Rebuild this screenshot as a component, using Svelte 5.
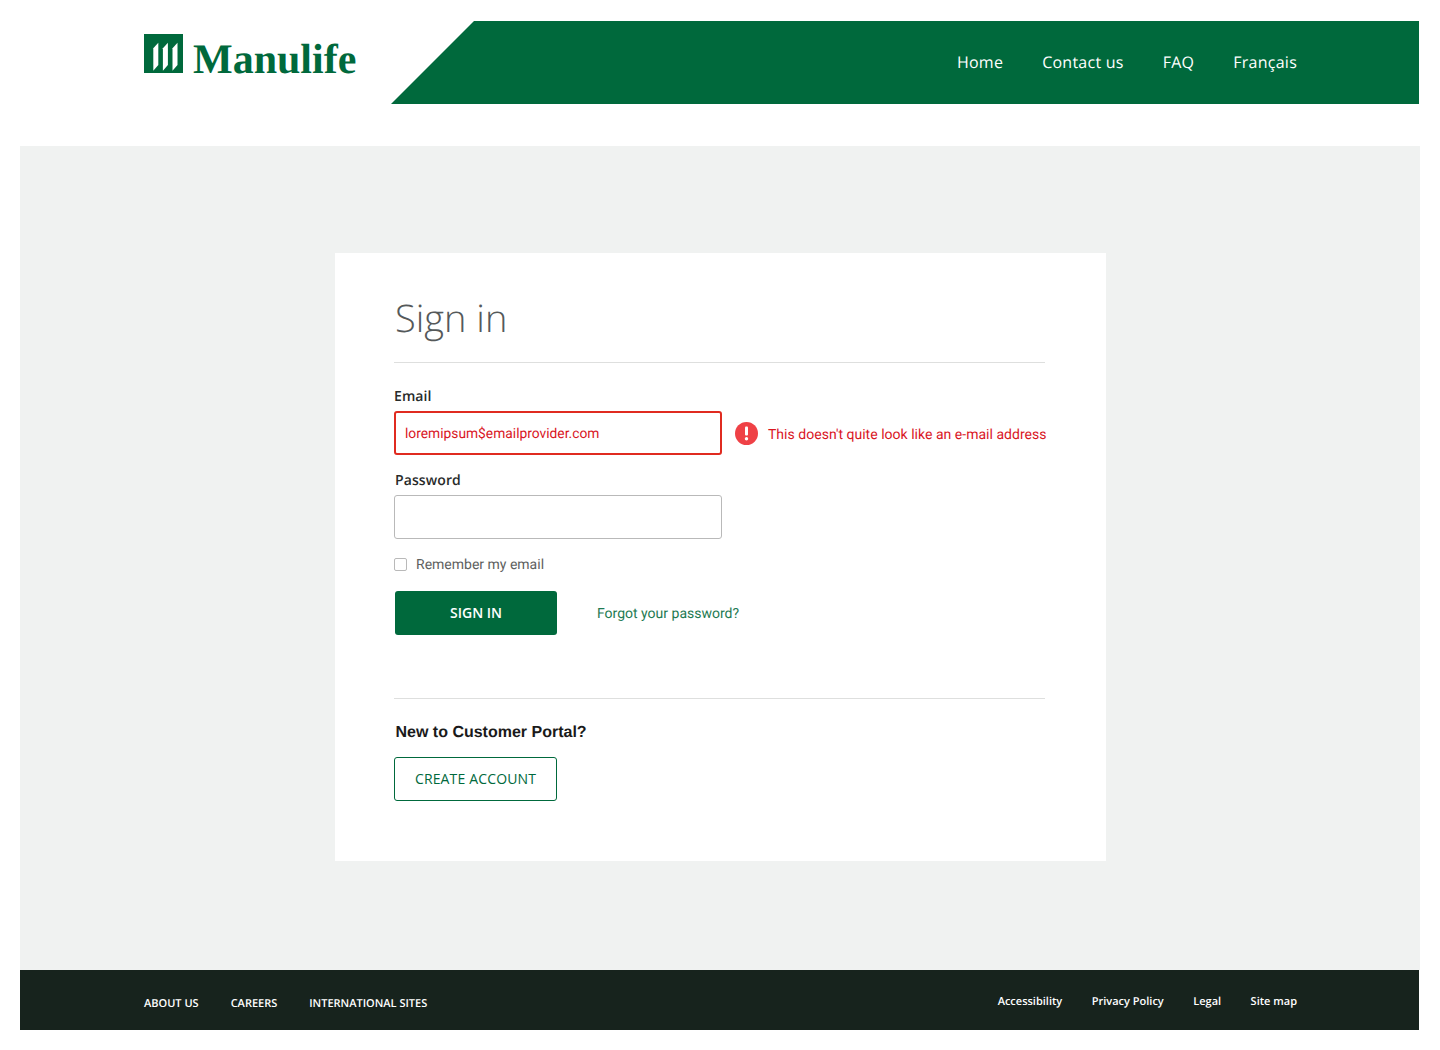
<script>
  const navLinks = ["Home", "Contact us", "FAQ", "Français"];
  const footerLeft = ["ABOUT US", "CAREERS", "INTERNATIONAL SITES"];
  const footerRight = ["Accessibility", "Privacy Policy", "Legal", "Site map"];
  const stripes = [0, 9.6, 19.2];
</script>

<div class="page">
  <header class="header">
    <div class="brand">
      <svg class="mark" width="39" height="39" viewBox="0 0 39 39" aria-hidden="true">
        <rect width="39" height="39" fill="#00693c" />
        {#each stripes as dx}
          <polygon points="{9.3 + dx},14.3 {14.3 + dx},8.7 {14.3 + dx},31 {9.3 + dx},36.7" fill="#fff" />
        {/each}
      </svg>
      <span class="wordmark">Manulife</span>
    </div>
    <nav class="nav">
      {#each navLinks as link}
        <span class="nav-link">{link}</span>
      {/each}
    </nav>
  </header>

  <main class="main">
    <section class="card">
      <h1 class="title">Sign in</h1>
      <hr class="rule" />

      <div class="label email-label">Email</div>
      <div class="field-row">
        <div class="input error">loremipsum$emailprovider.com</div>
        <svg class="alert" width="23" height="23" viewBox="0 0 23 23" aria-hidden="true">
          <circle cx="11.5" cy="11.5" r="11.5" fill="#ef4146" />
          <rect x="10" y="4.5" width="3" height="9" rx="1" fill="#fff" />
          <circle cx="11.5" cy="16.8" r="1.7" fill="#fff" />
        </svg>
        <span class="error-text">This doesn't quite look like an e-mail address</span>
      </div>

      <div class="label password-label">Password</div>
      <div class="input"></div>

      <div class="remember">
        <span class="checkbox"></span>
        <span class="remember-text">Remember my email</span>
      </div>

      <div class="actions">
        <button class="btn primary">SIGN IN</button>
        <span class="forgot">Forgot your password?</span>
      </div>

      <hr class="rule second" />

      <h2 class="new-title">New to Customer Portal?</h2>
      <button class="btn outline">CREATE ACCOUNT</button>
    </section>
  </main>

  <footer class="footer">
    <div class="footer-left">
      {#each footerLeft as link}
        <span>{link}</span>
      {/each}
    </div>
    <div class="footer-right">
      {#each footerRight as link}
        <span>{link}</span>
      {/each}
    </div>
  </footer>
</div>

<style>
  :global(body) {
    background: #fff;
    font-family: "Open Sans", sans-serif;
    text-rendering: geometricPrecision;
  }

  .page {
    width: 1400px;
    margin-left: 20px;
    height: 1050px;
  }

  .header {
    display: flex;
    height: 83px;
    padding-top: 21px;
    margin-bottom: 42px;
    width: 1399px;
  }

  .brand {
    display: flex;
    width: 247px;
    margin-left: 124px;
    flex: none;
    align-items: flex-start;
    padding-top: 13px;
  }

  .mark {
    flex: none;
  }

  .wordmark {
    margin: 1px 0 0 10px;
    font-family: "Liberation Serif", serif;
    font-weight: 700;
    font-size: 42px;
    line-height: 50px;
    color: #00693c;
  }

  .nav {
    flex: 1;
    display: flex;
    justify-content: flex-end;
    align-items: center;
    gap: 39px;
    padding: 0 122px 2px 0;
    box-sizing: border-box;
    background: #00693c;
    clip-path: polygon(83px 0, 100% 0, 100% 100%, 0 100%);
  }

  .nav-link {
    color: #fff;
    font-size: 16px;
    font-weight: 500;
    letter-spacing: 0.25px;
  }

  .main {
    height: 824px;
    background: #f0f2f1;
    padding-top: 107px;
    box-sizing: border-box;
  }

  .card {
    width: 771px;
    height: 608px;
    margin-left: 315px;
    box-sizing: border-box;
    padding: 0 61px 0 59px;
    background: #fff;
    overflow: hidden;
  }

  .title {
    margin: 35px 0 0 1px;
    font-size: 38px;
    line-height: 60px;
    font-weight: 300;
    color: #55595a;
  }

  .rule {
    margin: 14px 0 0;
    border: 0;
    border-top: 1px solid #dedfde;
  }

  .label {
    font-size: 14px;
    line-height: 20px;
    font-weight: 600;
    color: #282b2a;
    letter-spacing: 0.1px;
  }

  .email-label {
    margin-top: 24px;
  }

  .password-label {
    margin: 16px 0 0 1px;
  }

  .field-row {
    display: flex;
    align-items: center;
    margin-top: 4px;
  }

  .input {
    flex: none;
    width: 328px;
    height: 44px;
    box-sizing: border-box;
    margin-top: 4px;
    padding-left: 10px;
    border: 1px solid #b9b9b9;
    border-radius: 3px;
    background: #fff;
    font-family: Roboto, sans-serif;
    font-size: 13.8px;
    line-height: 42px;
  }

  .field-row .input {
    margin-top: 0;
  }

  .input.error {
    border: 2px solid #e02b20;
    padding-left: 9px;
    color: #d9161f;
  }

  .alert {
    margin-left: 13px;
    flex: none;
  }

  .error-text {
    margin-left: 10px;
    padding-top: 4px;
    font-family: Roboto, sans-serif;
    font-size: 14px;
    letter-spacing: 0.02px;
    color: #d9161f;
    white-space: nowrap;
  }

  .remember {
    display: flex;
    align-items: flex-start;
    margin-top: 15px;
    font-family: Roboto, sans-serif;
    font-size: 14px;
    line-height: 20px;
    color: #5e6160;
  }

  .remember-text {
    padding-top: 1px;
  }

  .checkbox {
    width: 11px;
    height: 11px;
    margin: 3.5px 9px 0 0;
    border: 1px solid #b9b9b9;
    border-radius: 2px;
  }

  .actions {
    display: flex;
    align-items: center;
    margin: 16px 0 0 1px;
  }

  .btn {
    width: 162px;
    height: 44px;
    box-sizing: border-box;
    border-radius: 3px;
    font-family: "Open Sans", sans-serif;
    font-size: 14px;
    font-weight: 600;
    padding: 0 0 2px;
  }

  .primary {
    border: 0;
    background: #00693c;
    color: #fff;
  }

  .forgot {
    margin-left: 40px;
    padding-top: 2px;
    font-family: Roboto, sans-serif;
    font-size: 14px;
    color: #1e7a52;
  }

  .rule.second {
    margin-top: 63px;
  }

  .new-title {
    margin: 23px 0 0 1.5px;
    font-family: "Liberation Sans", sans-serif;
    font-size: 16px;
    line-height: 22px;
    font-weight: 700;
    color: #1a1a1a;
  }

  .outline {
    display: block;
    width: 163px;
    margin-top: 13px;
    border: 1px solid #00693c;
    background: #fff;
    color: #00693c;
    font-weight: 500;
    letter-spacing: 0.15px;
  }

  .footer {
    display: flex;
    justify-content: space-between;
    width: 1399px;
    height: 60px;
    box-sizing: border-box;
    padding: 0 122px 0 124px;
    background: #17231d;
    color: #fff;
    font-size: 11px;
    font-weight: 600;
  }

  .footer-left {
    display: flex;
    gap: 32px;
    padding-top: 26px;
  }

  .footer-right {
    display: flex;
    gap: 29.5px;
    padding-top: 24px;
  }
</style>
